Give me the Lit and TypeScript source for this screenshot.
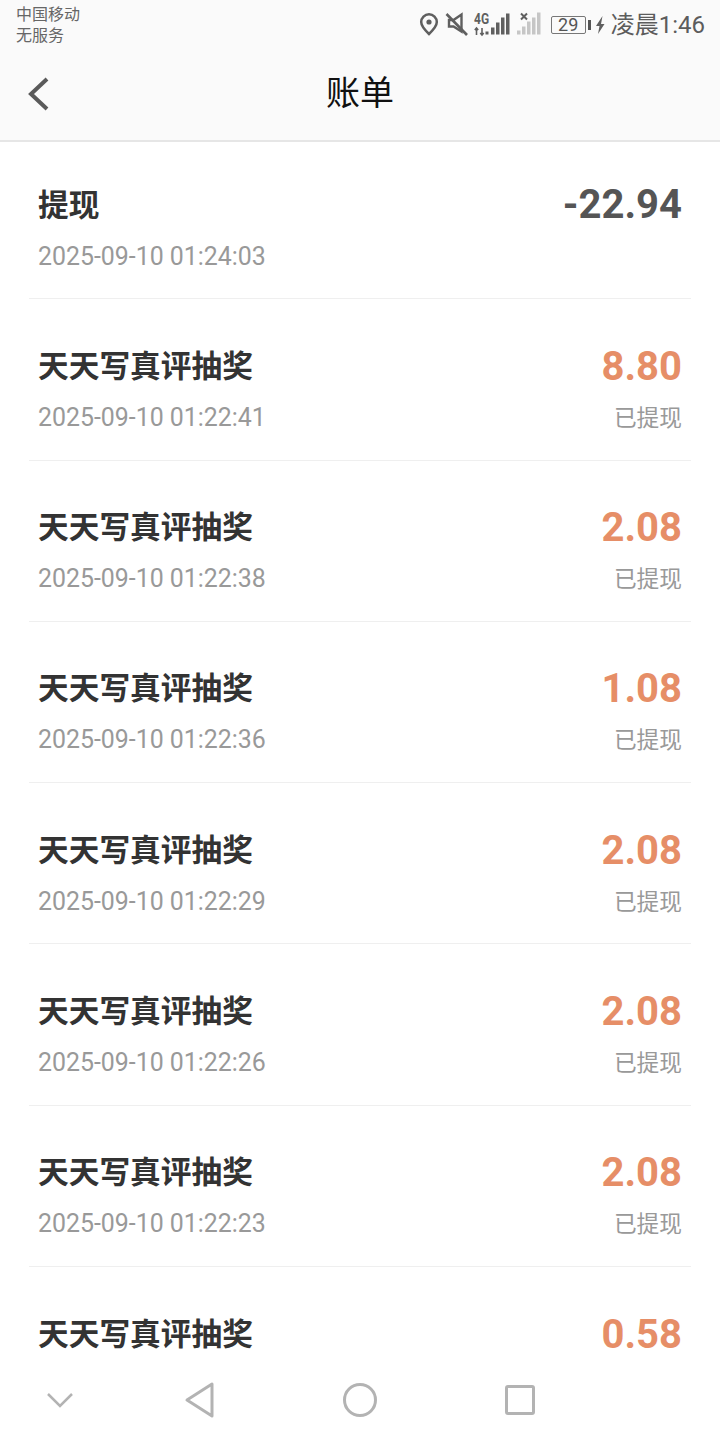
import { LitElement, html, css, svg } from "lit";
import { customElement } from "lit/decorators.js";

const rows = [
  { t: "提现", d: "2025-09-10 01:24:03", a: "-22.94", neg: true },
  { t: "天天写真评抽奖", d: "2025-09-10 01:22:41", a: "8.80" },
  { t: "天天写真评抽奖", d: "2025-09-10 01:22:38", a: "2.08" },
  { t: "天天写真评抽奖", d: "2025-09-10 01:22:36", a: "1.08" },
  { t: "天天写真评抽奖", d: "2025-09-10 01:22:29", a: "2.08" },
  { t: "天天写真评抽奖", d: "2025-09-10 01:22:26", a: "2.08" },
  { t: "天天写真评抽奖", d: "2025-09-10 01:22:23", a: "2.08" },
  { t: "天天写真评抽奖", d: "2025-09-10 01:22:20", a: "0.58" },
];

const onBars = [
  [71, 7],
  [76, 12],
  [81, 17],
  [86, 21],
];
const offBars = [
  [97, 4],
  [102, 8],
  [107, 13],
  [112, 17],
  [117, 22],
];
const bars = (list: number[][], color: string) =>
  svg`${list.map(([x, h]) => svg`<rect x=${x} y=${22.5 - h} width="3.500" height=${h} fill=${color}></rect>`)}`;

@customElement("app-root")
export class AppRoot extends LitElement {
  static styles = css`
    :host {
      display: block;
      position: relative;
      width: 720px;
      height: 1440px;
      overflow: hidden;
      background: #fff;
      font-family: Roboto, "Noto Sans CJK SC", sans-serif;
    }
    .top {
      height: 140px;
      background: #fafafa;
      border-bottom: 2px solid #e6e6e6;
      display: flex;
      flex-direction: column;
    }
    .status {
      height: 50px;
      display: flex;
      justify-content: space-between;
      padding: 0 15px 0 16px;
      color: #666;
    }
    .carrier {
      font-size: 16px;
      line-height: 21px;
      padding-top: 3px;
      font-family: "Noto Sans CJK SC", sans-serif;
    }
    .sicons {
      display: flex;
      align-items: center;
      height: 50px;
    }
    .sicons svg {
      overflow: visible;
    }
    .batt {
      width: 35px;
      height: 18px;
      box-sizing: border-box;
      border: 1px solid #777;
      border-radius: 2px;
      font-size: 18px;
      line-height: 16px;
      text-align: center;
      color: #555;
      margin-left: 11px;
    }
    .cap {
      width: 3px;
      height: 10px;
      background: #555;
      margin-left: 2px;
    }
    .bolt {
      margin-left: 3px;
    }
    .clock {
      font-size: 24px;
      line-height: 28px;
      color: #5c5c5c;
      margin-left: 5px;
    }
    .nav {
      flex: 1;
      position: relative;
      display: flex;
      align-items: center;
      justify-content: center;
      padding-bottom: 8px;
    }
    .nav h1 {
      margin: 0;
      font-size: 34px;
      font-weight: 400;
      color: #111;
      font-family: "Noto Sans CJK SC", sans-serif;
      line-height: 44px;
    }
    .back {
      position: absolute;
      left: 26px;
      top: 26px;
    }
    .list {
      padding: 0 29px;
    }
    .row {
      height: 160.3px;
      border-bottom: 1px solid #efefef;
      display: flex;
      justify-content: space-between;
      padding: 0 9px;
    }
    .row.first {
      height: 156.3px;
    }
    .left,
    .right {
      display: flex;
      flex-direction: column;
    }
    .left {
      padding-top: 41.6px;
    }
    .right {
      align-items: flex-end;
      padding-top: 44.6px;
    }
    .first .left {
      padding-top: 38px;
    }
    .first .right {
      padding-top: 40px;
    }
    .name {
      font-family: "Noto Sans CJK SC", sans-serif;
      font-size: 30.7px;
      font-weight: 700;
      line-height: 46px;
      color: #333;
      margin-bottom: 13px;
    }
    .date {
      font-size: 24.9px;
      line-height: 36px;
      color: #999;
    }
    .amt {
      font-size: 40px;
      font-weight: 700;
      line-height: 46px;
      color: #e68e67;
      margin-bottom: 9px;
    }
    .amt.neg {
      color: #555;
    }
    .state {
      font-family: "Noto Sans CJK SC", sans-serif;
      font-size: 22.7px;
      line-height: 36px;
      color: #999;
    }
    .bottom {
      position: absolute;
      left: 0;
      right: 0;
      bottom: 0;
      height: 80px;
      background: #fff;
    }
    .bottom svg {
      display: block;
    }
  `;

  render() {
    return html`
      <div class="top">
        <div class="status">
          <div class="carrier">中国移动<br />无服务</div>
          <div class="sicons">
            <svg width="120" height="26" viewBox="0 0 120 26">
              <path d="M9 2.300a7.800 7.800 0 0 0-7.800 7.800c0 4.600 7.800 11.900 7.800 11.900s7.800-7.300 7.800-11.900a7.800 7.800 0 0 0-7.800-7.800z" fill="none" stroke="#5f5f5f" stroke-width="2.500"></path>
              <circle cx="9" cy="10" r="2.600" fill="#5f5f5f"></circle>
              <path d="M29 8h4.500l8-5.500v17l-8-5H29z" fill="none" stroke="#5f5f5f" stroke-width="2.400"></path>
              <path d="M26.500 2l20.500 21" stroke="#5f5f5f" stroke-width="2.600"></path>
              <text transform="translate(54 12) scale(.8 1)" font-size="15" font-weight="700" fill="#5f5f5f" font-family="Roboto">4G</text>
              <path d="M56.500 16v7M54.800 18l1.700-2 1.700 2M62 16v7M60.300 21l1.700 2 1.700-2" fill="none" stroke="#5f5f5f" stroke-width="1.600"></path>
              <rect x="65.500" y="19.500" width="3" height="3" fill="#5f5f5f"></rect>
              ${bars(onBars, "#5f5f5f")}
              <path d="M101 1.500l6 6M107 1.500l-6 6" stroke="#5f5f5f" stroke-width="2"></path>
              ${bars(offBars, "#c6c6c6")}
            </svg>
            <div class="batt">29</div>
            <div class="cap"></div>
            <svg class="bolt" width="12" height="20" viewBox="0 0 12 20">
              <path d="M8.500 1L2 11h3.500L4 19l6.500-10H7z" fill="#5f5f5f"></path>
            </svg>
            <div class="clock">凌晨1:46</div>
          </div>
        </div>
        <div class="nav">
          <svg class="back" width="26" height="36" viewBox="0 0 26 36">
            <path d="M21 3L5 18l16 15" fill="none" stroke="#5a5a5a" stroke-width="4"></path>
          </svg>
          <h1>账单</h1>
        </div>
      </div>
      <div class="list">
        ${rows.map(
          (r, i) => html`
            <div class="row ${i === 0 ? "first" : ""}">
              <div class="left">
                <div class="name">${r.t}</div>
                <div class="date">${r.d}</div>
              </div>
              <div class="right">
                <div class="amt ${r.neg ? "neg" : ""}">${r.a}</div>
                ${r.neg ? "" : html`<div class="state">已提现</div>`}
              </div>
            </div>
          `
        )}
      </div>
      <div class="bottom">
        <svg width="720" height="80" viewBox="0 0 720 80">
          <path d="M48 34l12 12 12-12" fill="none" stroke="#b3b3b3" stroke-width="2.500"></path>
          <path d="M212 24v32l-25-16z" fill="none" stroke="#b3b3b3" stroke-width="3" stroke-linejoin="round"></path>
          <circle cx="360" cy="40" r="15.500" fill="none" stroke="#b3b3b3" stroke-width="3"></circle>
          <rect x="506.500" y="26.500" width="27" height="27" rx="1.500" fill="none" stroke="#b3b3b3" stroke-width="3"></rect>
        </svg>
      </div>
    `;
  }
}
